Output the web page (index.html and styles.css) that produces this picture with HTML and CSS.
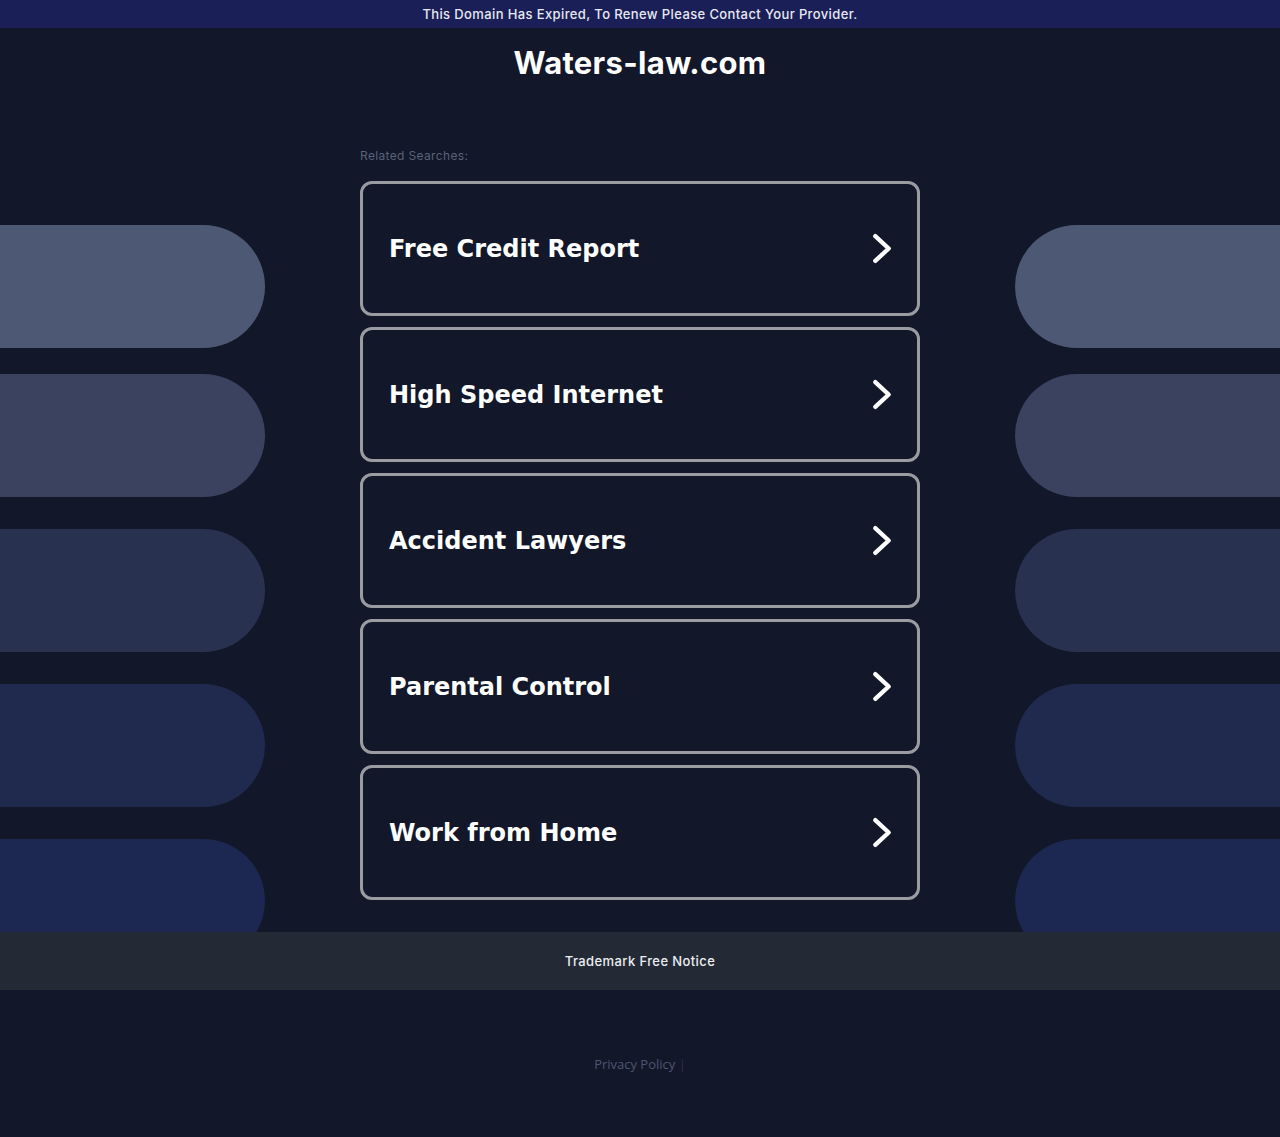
FILE: index.html
```html
<!doctype html>
<html lang="en">
<head>
  <meta charset="UTF-8">
  <title>Waters-law.com</title>
  <link rel="stylesheet" href="styles.css">
</head>
<body>
  <div class="banner">This Domain Has Expired, To Renew Please Contact Your Provider.</div>
  <h1 class="title">Waters-law.com</h1>

  <div class="main">
    <div class="deco deco-left">
      <div class="pill p1"></div>
      <div class="pill p2"></div>
      <div class="pill p3"></div>
      <div class="pill p4"></div>
      <div class="pill p5"></div>
    </div>

    <div class="center">
      <p class="related">Related Searches:</p>
      <ul class="links">
        <li><a href="#">Free Credit Report<svg class="chev" viewBox="0 0 20 30"><polyline points="3,3 16,15 3,27"/></svg></a></li>
        <li><a href="#">High Speed Internet<svg class="chev" viewBox="0 0 20 30"><polyline points="3,3 16,15 3,27"/></svg></a></li>
        <li><a href="#">Accident Lawyers<svg class="chev" viewBox="0 0 20 30"><polyline points="3,3 16,15 3,27"/></svg></a></li>
        <li><a href="#">Parental Control<svg class="chev" viewBox="0 0 20 30"><polyline points="3,3 16,15 3,27"/></svg></a></li>
        <li><a href="#">Work from Home<svg class="chev" viewBox="0 0 20 30"><polyline points="3,3 16,15 3,27"/></svg></a></li>
      </ul>
    </div>

    <div class="deco deco-right">
      <div class="pill p1"></div>
      <div class="pill p2"></div>
      <div class="pill p3"></div>
      <div class="pill p4"></div>
      <div class="pill p5"></div>
    </div>
  </div>

  <div class="trademark">Trademark Free Notice</div>
  <div class="privacy"><a href="#">Privacy Policy</a> <span class="sep">|</span></div>
</body>
</html>
```

FILE: styles.css
```css
body {margin: 0; background: #121729; font-family: "Inter", "Open Sans", sans-serif;}

.banner {height: 28px; line-height: 28px; background: #1a1f58; color: #e8e9f2; text-align: center; font-size: 13px; font-weight: 500; letter-spacing: 0.38px;}
.title {margin: 15px 0 0; height: 40px; line-height: 40px; text-align: center; color: #fff; font-size: 31px; font-weight: 700; letter-spacing: 0.3px;}

.main {display: grid; grid-template-columns: 1fr 560px 1fr; column-gap: 95px;}

.deco {contain: size; overflow: hidden; padding-top: 142px; display: flex; flex-direction: column; gap: 32px;}
.deco .pill:first-child {margin-bottom: -6px;}
.pill {height: 123px; flex: none;}
.deco-left .pill {border-radius: 0 62px 62px 0;}
.deco-right .pill {border-radius: 62px 0 0 62px;}
.p1 {background: #4d5874;}
.p2 {background: #3a4260;}
.p3 {background: #283150;}
.p4 {background: #1f2a4e;}
.p5 {background: #1c2851;}

.center {padding: 65px 0 32px;}
.related {margin: 0 0 17px; line-height: 16px; font-size: 12px; color: #5b6279; letter-spacing: 0.35px;}
.links {list-style: none; margin: 0; padding: 0;}
.links li {margin-bottom: 11px;}
.links li:last-child {margin-bottom: 0;}
.links a {display: flex; align-items: center; justify-content: space-between; height: 129px; padding: 0 24px 0 26px; border: 3px solid #9b9ca1; border-radius: 12px; color: #fff; text-decoration: none; font-family: "DejaVu Sans", sans-serif; font-weight: bold; font-size: 24px;}
.chev {width: 21px; height: 31px; fill: none; stroke: #fff; stroke-width: 4.2; stroke-linecap: round; stroke-linejoin: round;}

.trademark {height: 58px; line-height: 58px; background: #242a35; color: #eceef2; text-align: center; font-size: 13px; font-weight: 500; letter-spacing: 0.4px;}
.privacy {padding-top: 66px; line-height: 16px; height: 81px; text-align: center; font-family: "Open Sans", sans-serif; font-size: 13px;}
.privacy a {color: #4e5570; text-decoration: none;}
.privacy .sep {color: #2d3346;}
```
